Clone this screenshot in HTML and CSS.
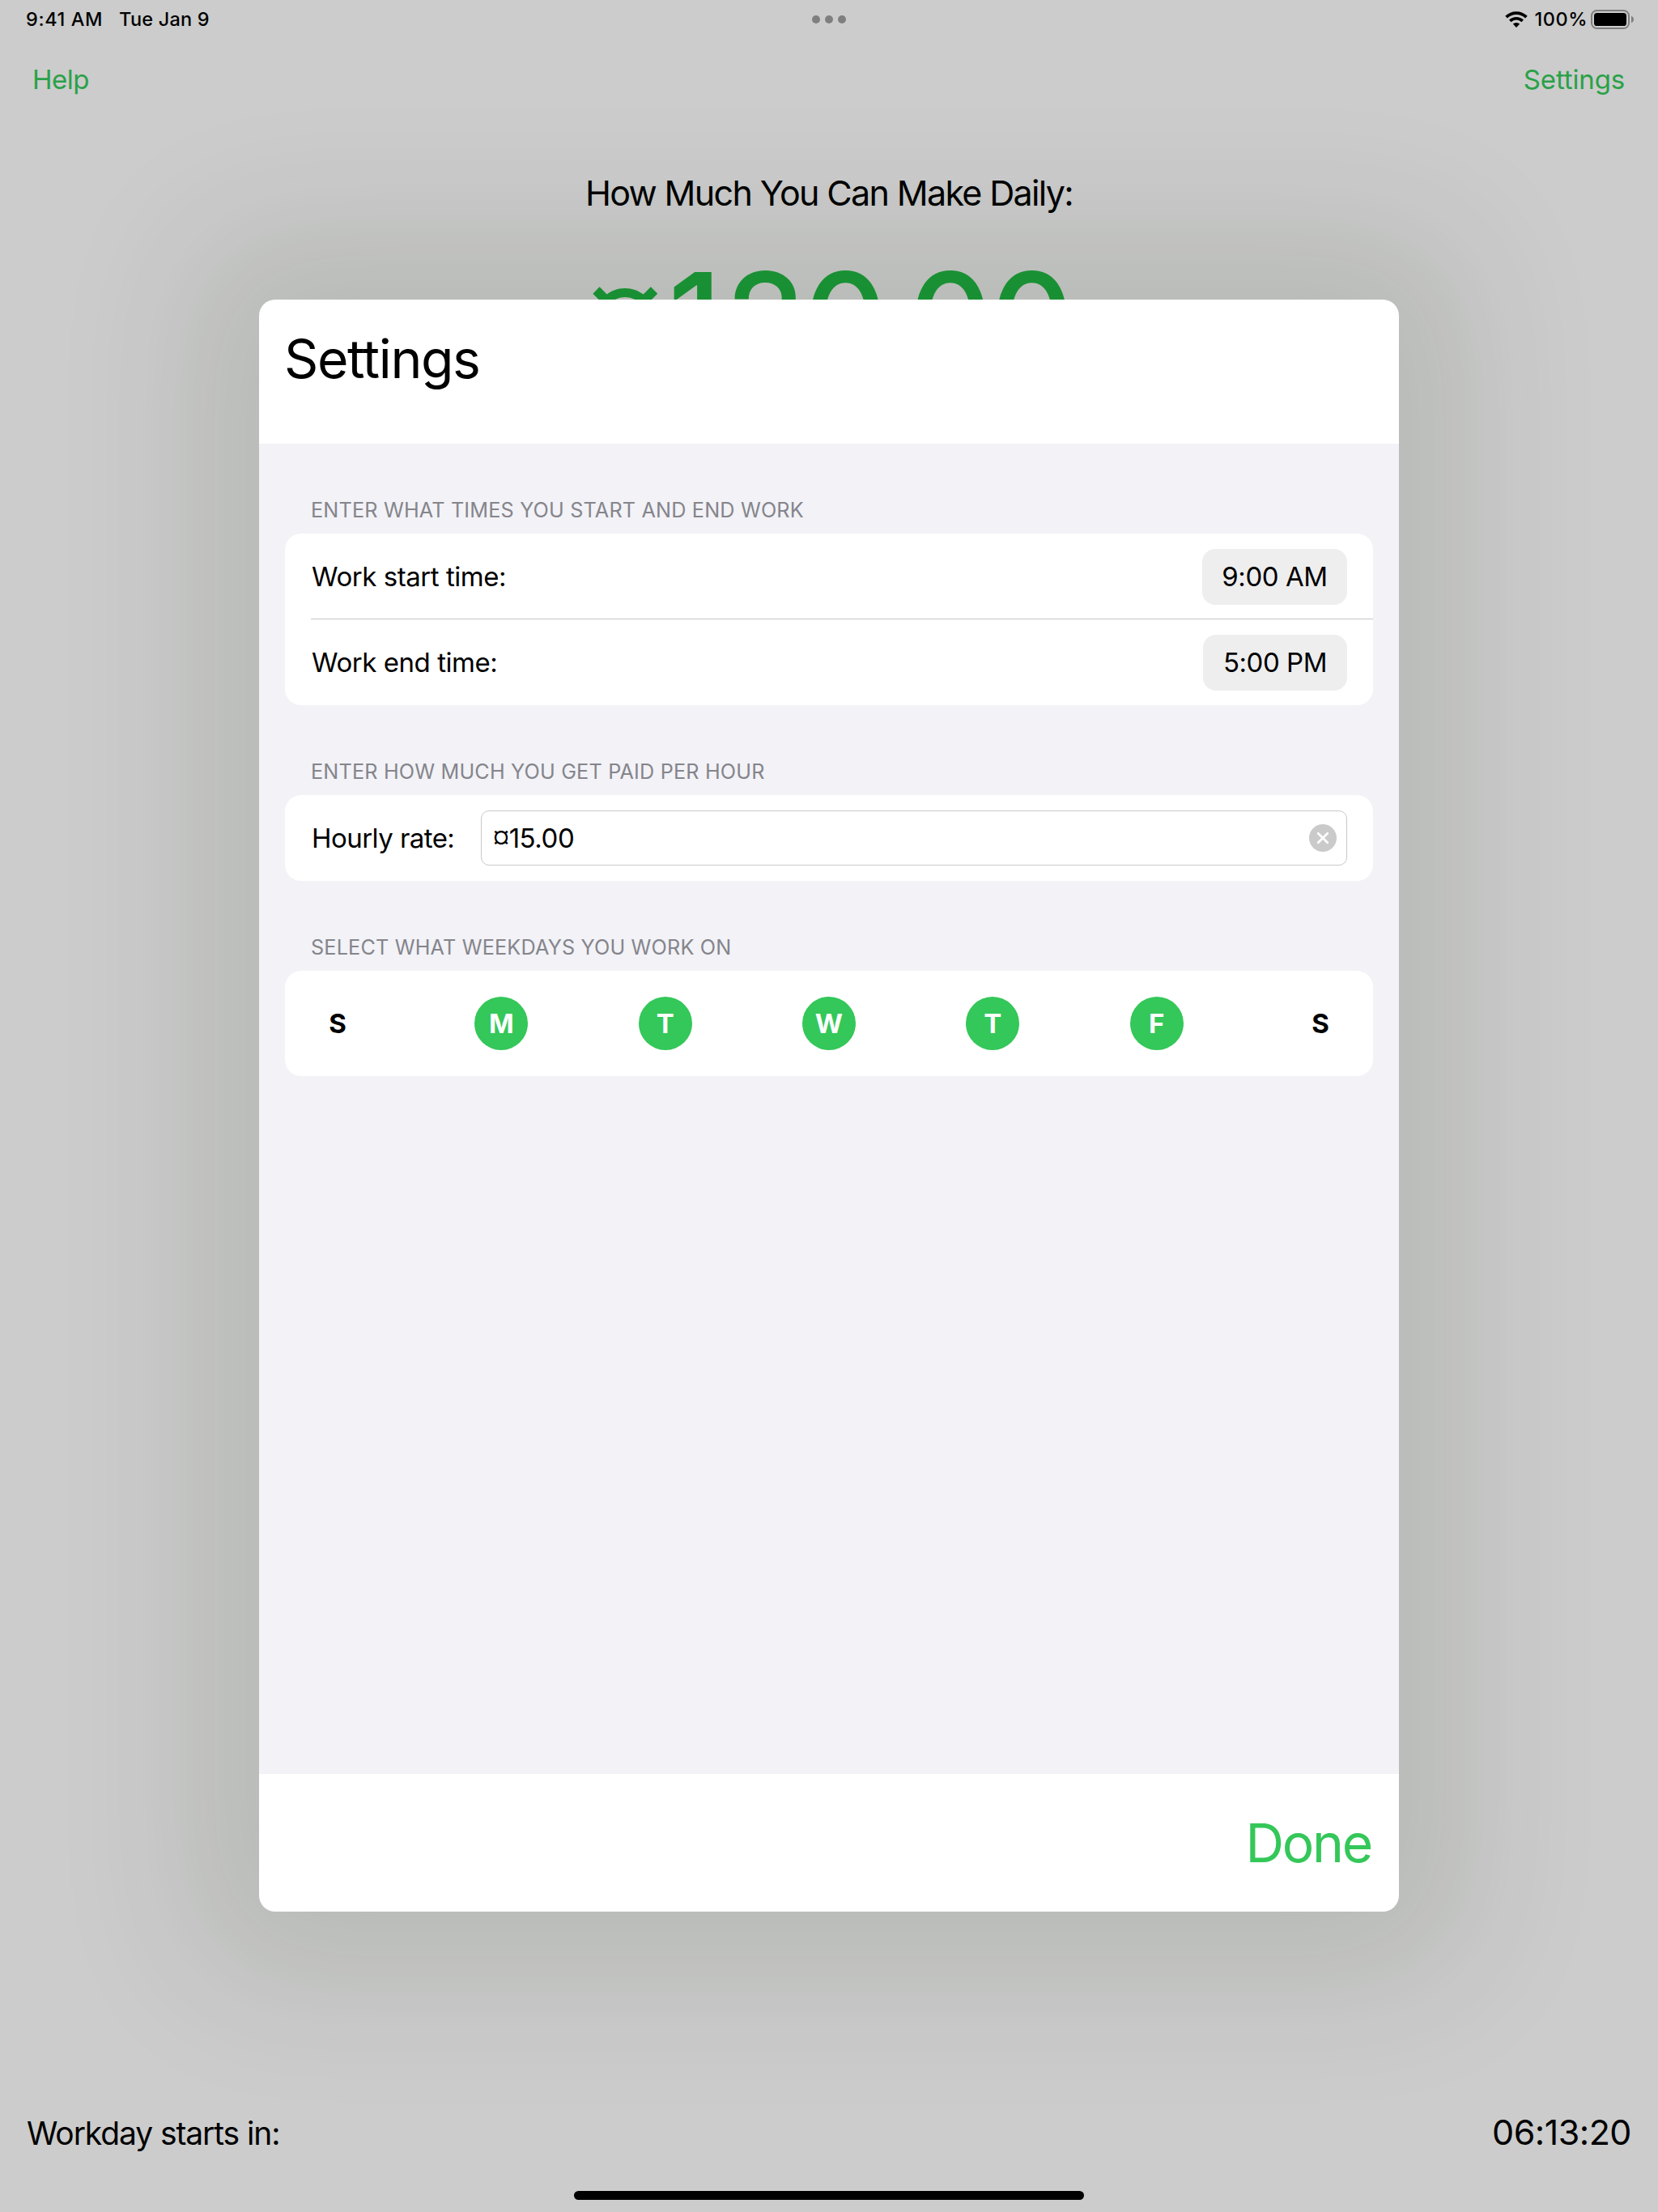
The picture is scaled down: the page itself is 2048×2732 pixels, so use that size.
FILE: index.html
```html
<!DOCTYPE html>
<html lang="en">
<head>
<meta charset="utf-8">
<title>Settings</title>
<link rel="stylesheet" href="styles.css">
</head>
<body>
<div class="screen">
  <header class="status">
    <div class="status-left"><span class="clock">9:41 AM</span><span class="date">Tue Jan 9</span></div>
    <div class="dots"><i></i><i></i><i></i></div>
    <div class="status-right">
      <svg class="wifi" width="28" height="20" viewBox="0 0 28 20">
        <path d="M1.6 7.2A17.6 17.6 0 0 1 26.4 7.2" fill="none" stroke="#000" stroke-width="3.8"/>
        <path d="M6.3 11.9A11 11 0 0 1 21.7 11.9" fill="none" stroke="#000" stroke-width="3.6"/>
        <path d="M9.8 15.6a6 6 0 0 1 8.4 0L14 19.9z"/>
      </svg>
      <span class="percent">100%</span>
      <svg class="battery" width="54" height="24" viewBox="0 0 54 24">
        <rect x="1" y="1" width="46" height="22" rx="6.5" fill="none" stroke="#7f7f7f" stroke-width="2"/>
        <rect x="4" y="4" width="40" height="16" rx="3.6"/>
        <path d="M50 7.8c4 1.600 4 6.800 0 8.400z" fill="#7f7f7f"/>
      </svg>
    </div>
  </header>
  <nav class="nav"><a class="help">Help</a><a class="open-settings">Settings</a></nav>
  <main class="earnings">
    <h2 class="earnings-title">How Much You Can Make Daily:</h2>
    <div class="amount"><span class="sign">¤</span><span class="lead">1</span>2<span class="before-point">0</span><span class="point">.</span>00</div>
  </main>
  <footer class="countdown"><span class="countdown-label">Workday starts in:</span><span class="countdown-time">06:13:20</span></footer>
  <div class="home-indicator"></div>

  <section class="sheet">
    <header class="sheet-head"><h1>Settings</h1></header>
    <div class="form">
      <h3 class="label label-times">ENTER WHAT TIMES YOU START AND END WORK</h3>
      <div class="card">
        <div class="row"><span class="start-label">Work start time:</span><span class="pill">9:00 AM</span></div>
        <div class="row row-line"><span class="end-label">Work end time:</span><span class="pill pill-end">5:00 PM</span></div>
      </div>
      <h3 class="label label-rate">ENTER HOW MUCH YOU GET PAID PER HOUR</h3>
      <div class="card">
        <div class="row">
          <span class="rate-label">Hourly rate:</span>
          <div class="field"><span class="value"><span class="sign">¤</span>15.00</span>
            <svg width="34" height="34" viewBox="0 0 34 34"><circle cx="17" cy="17" r="17" fill="#cacaca"/><path d="M11.200 11.200l11.600 11.600M22.800 11.200L11.200 22.800" stroke="#fff" stroke-width="2.700" stroke-linecap="round"/></svg>
          </div>
        </div>
      </div>
      <h3 class="label label-days">SELECT WHAT WEEKDAYS YOU WORK ON</h3>
      <div class="card days">
        <span class="day">S</span><span class="day on">M</span><span class="day on">T</span><span class="day on">W</span><span class="day on">T</span><span class="day on">F</span><span class="day">S</span>
      </div>
    </div>
    <footer class="sheet-foot"><a class="done">Done</a></footer>
  </section>
</div>
</body>
</html>
```

FILE: styles.css
```css
* { box-sizing: border-box; }
body { margin: 0; font-family: "Inter", "Liberation Sans", sans-serif; color: #000; }
h1, h2, h3 { margin: 0; font-weight: 400; }
svg { display: block; flex: none; }

.screen {
  position: relative;
  width: 2048px;
  height: 2732px;
  overflow: hidden;
  background: #ccc;
  display: flex;
  flex-direction: column;
  white-space: nowrap;
}

.status {
  display: grid;
  grid-template-columns: 1fr auto 1fr;
  align-items: center;
  height: 48px;
  padding: 0 30px;
  font-size: 23.500px;
  font-weight: 500;
}
.status-left { display: flex; gap: 20px; margin: -1px 0 0 2px; }
.clock { letter-spacing: 0.600px; }
.date { letter-spacing: 0.200px; }
.dots { display: flex; gap: 6px; }
.dots i { width: 10px; height: 10px; border-radius: 50%; background: #7f7f7f; }
.status-right { display: flex; justify-content: flex-end; align-items: center; margin-right: -1px; }
.percent { margin: -1px 4px 0 9px; letter-spacing: 0.500px; }

.nav {
  display: flex;
  justify-content: space-between;
  align-items: center;
  height: 100px;
  padding: 0 41px 0 40px;
  font-size: 33px;
  color: #2aa148;
}
.help { letter-spacing: -0.500px; }
.open-settings { letter-spacing: -0.150px; }

.earnings { flex: 1; display: flex; flex-direction: column; align-items: center; padding-top: 63px; }
.earnings-title { font-size: 43px; line-height: 54px; letter-spacing: -1.650px; }
.amount { margin-top: 32px; font-size: 160px; line-height: 194px; font-weight: 500; letter-spacing: -2.500px; color: #1b9a39; }
.sign { font-size: 0.84em; line-height: 0; vertical-align: 0.13em; }
.amount .sign { font-weight: 600; font-size: 0.8em; vertical-align: 0.15em; letter-spacing: 5px; }
.lead { letter-spacing: 5px; }
.before-point { letter-spacing: -9px; }
.point { letter-spacing: -9px; }

.countdown {
  display: flex;
  justify-content: space-between;
  align-items: baseline;
  padding: 0 33px;
  height: 99px;
}
.countdown-label { font-size: 39px; letter-spacing: -1.100px; }
.countdown-time { font-size: 43px; letter-spacing: -0.500px; }
.home-indicator { align-self: center; width: 630px; height: 11px; margin-bottom: 15px; border-radius: 6px; background: #000; }

/* Modal sheet floating over the dimmed screen */
.sheet {
  position: absolute;
  left: 320px;
  top: 370px;
  width: 1408px;
  height: 1991px;
  border-radius: 20px;
  overflow: hidden;
  background: #fff;
  display: flex;
  flex-direction: column;
  box-shadow: 0 0 180px 78px rgba(15, 48, 5, 0.112);
}
.sheet-head { height: 178px; padding: 32px 31px 0; }
.sheet-head h1 { font-size: 66px; line-height: 82px; letter-spacing: -1.400px; }
.form { flex: 1; padding: 66px 32px 0; background: #f2f2f7; }
.label { margin-left: 32px; font-size: 25.200px; line-height: 32px; letter-spacing: 0.180px; color: #85858b; }
.card { margin: 13px 0 66px; border-radius: 20px; background: #fff; }
.row {
  position: relative;
  display: flex;
  align-items: center;
  justify-content: space-between;
  height: 106px;
  padding: 0 32px 0 33px;
  font-size: 33px;
  letter-spacing: -0.450px;
}
.row-line::before { content: ""; position: absolute; left: 32px; right: 0; top: -1px; height: 1px; background: #c6c6c8; }
.rate-label { letter-spacing: -0.550px; }
.pill { width: 179px; height: 69px; border-radius: 16px; background: #eeeeef; line-height: 69px; text-align: center; }
.pill-end { width: 178px; }
.field {
  width: 1070px;
  height: 68px;
  padding: 0 12px 0 14px;
  border: 1px solid #c8c8c8;
  border-radius: 10px;
  display: flex;
  align-items: center;
  justify-content: space-between;
}
.days { display: flex; justify-content: space-between; padding: 32px; }
.day { width: 66px; height: 66px; border-radius: 50%; font-size: 33px; font-weight: 700; line-height: 66px; text-align: center; }
.on { background: #34c759; color: #fff; }

.sheet-foot { height: 170px; padding: 44px 34px 0; text-align: right; }
.done { font-size: 66px; line-height: 82px; letter-spacing: -2.300px; color: #34c759; }
```
